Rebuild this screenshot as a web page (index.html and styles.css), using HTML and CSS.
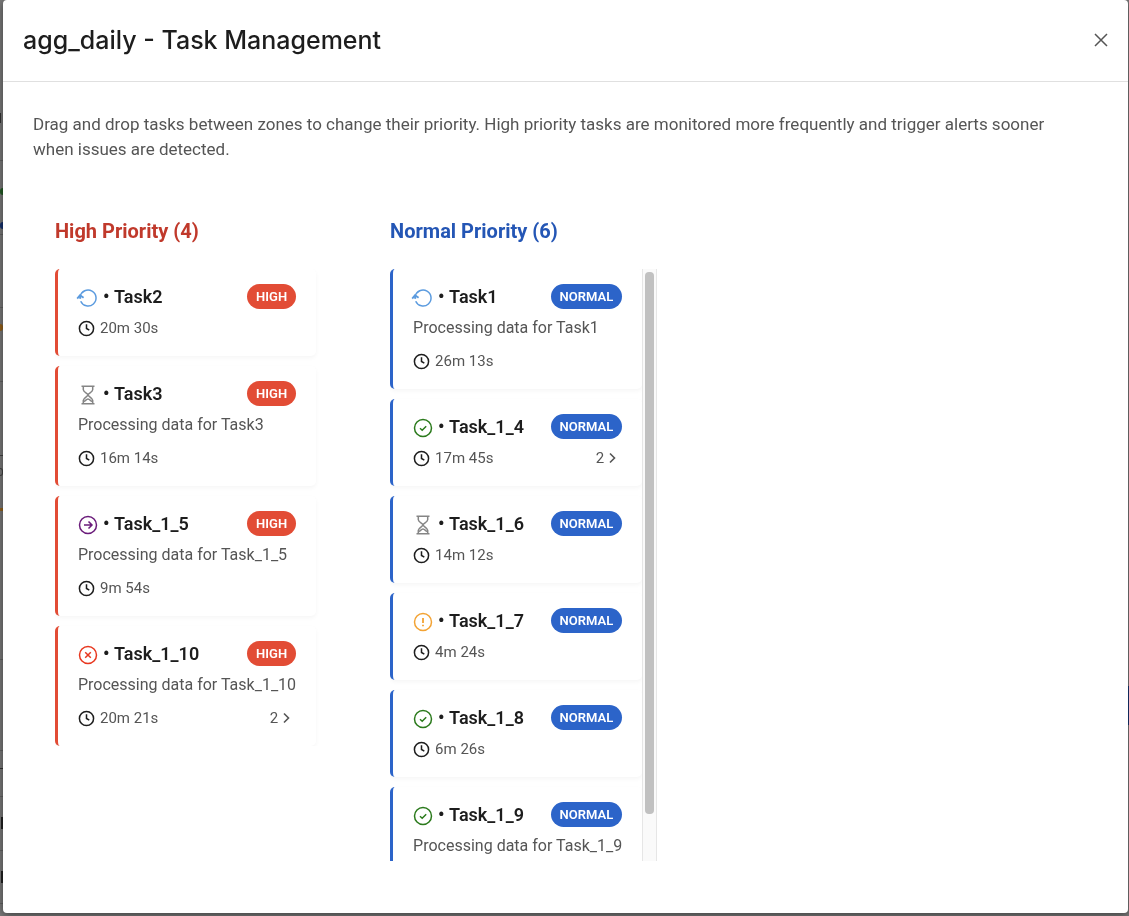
FILE: index.html
```
<!DOCTYPE html>
<html lang="en">
<head>
<meta charset="utf-8">
<title>agg_daily - Task Management</title>
<link rel="stylesheet" href="styles.css">
</head>
<body>
<svg class="sprite" aria-hidden="true">
  <symbol id="running" viewBox="0 0 20 20" overflow="visible"><path d="M2.200 8.500A8 8 0 1 1 2.700 13.200"/><path d="M-.8 10.600 2 7.200l3.600 2.600M2 7.400l.3 3.400" stroke-width="1.800"/></symbol>
  <symbol id="waiting" viewBox="0 0 20 20"><path d="M3.500 1.200h13M3.500 18.800h13M5.300 1.200v3.600c0 2.300 4.700 4 4.700 5.200s-4.700 2.900-4.700 5.200v3.600M14.700 1.200v3.600c0 2.300-4.700 4-4.700 5.200s4.700 2.900 4.700 5.200v3.600"/><path d="M6 16.500c1.500-.8 2.500-2.500 4-2.500s2.500 1.700 4 2.500"/></symbol>
  <symbol id="moved" viewBox="0 0 20 20"><circle cx="10" cy="10" r="8.500"/><path d="M6 10h8M10.500 6.500 14 10l-3.500 3.500"/></symbol>
  <symbol id="failed" viewBox="0 0 20 20"><circle cx="10" cy="10" r="8.500"/><path d="m7.200 7.200 5.600 5.600M12.800 7.200l-5.600 5.600"/></symbol>
  <symbol id="done" viewBox="0 0 20 20"><circle cx="10" cy="10" r="8.500"/><path d="m7 10.200 2.200 2 4-4"/></symbol>
  <symbol id="warning" viewBox="0 0 20 20"><circle cx="10" cy="10" r="8.500"/><path d="M10 6v5M10 12.700v1.600" stroke-width="1.800"/></symbol>
  <symbol id="clock" viewBox="0 0 18 18"><circle cx="9" cy="9" r="7.500"/><path d="M9 4.600V9l3 1.700"/></symbol>
  <symbol id="chevron" viewBox="0 0 10 12"><path d="m2 1.500 4.500 4.500L2 10.500"/></symbol>
</svg>

<div class="backdrop" aria-hidden="true">
  <i class="mark text-a"></i><i class="mark rule-a"></i><i class="mark green"></i><i class="mark blue"></i><i class="mark rule-b"></i><i class="mark rule-c"></i>
  <i class="mark orange"></i><i class="mark rule-d"></i><i class="mark rule-e"></i><i class="mark ring"></i><i class="mark amber"></i><i class="mark rule-f"></i><i class="mark rule-g"></i><i class="mark text-b"></i>
  <i class="mark rule-h"></i><i class="mark text-c"></i><i class="mark rule-i"></i><i class="mark text-d"></i><i class="mark rule-j"></i><i class="mark navy"></i>
</div>

<main class="dialog" role="dialog" aria-labelledby="dialog-title">
  <header class="dialog-header">
    <h1 id="dialog-title">agg_daily - Task Management</h1>
    <button class="close" type="button" aria-label="Close"><svg viewBox="0 0 16 16"><path d="m2 2 12 12M14 2 2 14"/></svg></button>
  </header>
  <div class="dialog-body">
    <p class="intro">Drag and drop tasks between zones to change their priority. High priority tasks are monitored more frequently and trigger alerts sooner when issues are detected.</p>
    <div class="zones">
      <section class="zone high">
        <h2>High Priority (4)</h2>
        <div class="list">
          <article class="card">
            <div class="top"><svg class="status running"><use href="#running"/></svg><span class="dot">•</span><h3>Task2</h3><span class="pill">HIGH</span></div>
            <div class="meta"><svg class="clock"><use href="#clock"/></svg><span>20m 30s</span></div>
          </article>
          <article class="card">
            <div class="top"><svg class="status waiting"><use href="#waiting"/></svg><span class="dot">•</span><h3>Task3</h3><span class="pill">HIGH</span></div>
            <p class="desc">Processing data for Task3</p>
            <div class="meta"><svg class="clock"><use href="#clock"/></svg><span>16m 14s</span></div>
          </article>
          <article class="card">
            <div class="top"><svg class="status moved"><use href="#moved"/></svg><span class="dot">•</span><h3>Task_1_5</h3><span class="pill">HIGH</span></div>
            <p class="desc">Processing data for Task_1_5</p>
            <div class="meta"><svg class="clock"><use href="#clock"/></svg><span>9m 54s</span></div>
          </article>
          <article class="card">
            <div class="top"><svg class="status failed"><use href="#failed"/></svg><span class="dot">•</span><h3>Task_1_10</h3><span class="pill">HIGH</span></div>
            <p class="desc">Processing data for Task_1_10</p>
            <div class="meta"><svg class="clock"><use href="#clock"/></svg><span>20m 21s</span><button class="more" type="button">2<svg><use href="#chevron"/></svg></button></div>
          </article>
        </div>
      </section>
      <section class="zone normal">
        <h2>Normal Priority (6)</h2>
        <div class="scroller">
        <div class="list">
          <article class="card">
            <div class="top"><svg class="status running"><use href="#running"/></svg><span class="dot">•</span><h3>Task1</h3><span class="pill">NORMAL</span></div>
            <p class="desc">Processing data for Task1</p>
            <div class="meta"><svg class="clock"><use href="#clock"/></svg><span>26m 13s</span></div>
          </article>
          <article class="card">
            <div class="top"><svg class="status done"><use href="#done"/></svg><span class="dot">•</span><h3>Task_1_4</h3><span class="pill">NORMAL</span></div>
            <div class="meta"><svg class="clock"><use href="#clock"/></svg><span>17m 45s</span><button class="more" type="button">2<svg><use href="#chevron"/></svg></button></div>
          </article>
          <article class="card">
            <div class="top"><svg class="status waiting"><use href="#waiting"/></svg><span class="dot">•</span><h3>Task_1_6</h3><span class="pill">NORMAL</span></div>
            <div class="meta"><svg class="clock"><use href="#clock"/></svg><span>14m 12s</span></div>
          </article>
          <article class="card">
            <div class="top"><svg class="status warning"><use href="#warning"/></svg><span class="dot">•</span><h3>Task_1_7</h3><span class="pill">NORMAL</span></div>
            <div class="meta"><svg class="clock"><use href="#clock"/></svg><span>4m 24s</span></div>
          </article>
          <article class="card">
            <div class="top"><svg class="status done"><use href="#done"/></svg><span class="dot">•</span><h3>Task_1_8</h3><span class="pill">NORMAL</span></div>
            <div class="meta"><svg class="clock"><use href="#clock"/></svg><span>6m 26s</span></div>
          </article>
          <article class="card">
            <div class="top"><svg class="status done"><use href="#done"/></svg><span class="dot">•</span><h3>Task_1_9</h3><span class="pill">NORMAL</span></div>
            <p class="desc">Processing data for Task_1_9</p>
            <div class="meta"></div>
          </article>
        </div>
        <div class="track" aria-hidden="true"><div class="thumb"></div></div>
        </div>
      </section>
    </div>
  </div>
</main>
</body>
</html>
```

FILE: styles.css
```
* { box-sizing: border-box; }
body {
  margin: 0;
  height: 100vh;
  padding: 0 1px 3px 3px;
  overflow: hidden;
  background: #7a7a7a;
  font-family: Roboto, "Liberation Sans", sans-serif;
  color: #1d1d1d;
}
h1, h2, h3, p { margin: 0; }
button { border: 0; padding: 0; background: none; font: inherit; color: inherit; cursor: pointer; }
svg { fill: none; stroke: currentColor; flex: none; }
.sprite { position: absolute; width: 0; height: 0; }

/* Dimmed page behind the dialog */
.backdrop { position: fixed; inset: 0; }
.mark { position: absolute; left: 0; width: 3px; height: 1px; background: #636363; }
.text-a { top: 113px; width: 1px; height: 10px; background: #333; }
.rule-a { top: 160px; }
.green { top: 188px; height: 7px; border-radius: 4px 0 0 4px; background: #235c25; }
.blue { top: 222px; height: 7px; border-radius: 4px 0 0 4px; background: #16316e; }
.rule-b { top: 234px; }
.rule-c { top: 307px; }
.orange { top: 324px; height: 7px; border-radius: 0 4px 4px 0; background: #96611a; }
.rule-d { top: 381px; }
.rule-e { top: 455px; background: #444; }
.ring { top: 468px; height: 8px; background: none; border: 1px solid #444; border-left: 0; border-radius: 0 3px 3px 0; }
.amber { top: 508px; height: 3px; background: #94641f; }
.rule-f { top: 659px; }
.rule-g { top: 750px; }
.text-b { top: 768px; background: #333; }
.rule-h { top: 796px; }
.text-c { top: 817px; left: 1px; width: 2px; height: 12px; background: #222; }
.rule-i { top: 850px; }
.text-d { top: 871px; left: 1px; width: 2px; height: 12px; background: #222; }
.rule-j { top: 903px; }
.navy { top: 686px; left: auto; right: 0; width: 1px; height: 39px; background: #143474; }

.dialog {
  position: relative;
  height: 100%;
  display: flex;
  flex-direction: column;
  background: #fff;
  border-radius: 4px;
  box-shadow: 0 2px 8px rgba(0, 0, 0, .5);
}
.dialog-header {
  display: flex;
  align-items: center;
  justify-content: space-between;
  padding: 20px 19px 20px 20px;
  border-bottom: 1px solid #e0e0e0;
}
h1 { font: 500 25px/41px Inter, sans-serif; }
.close { display: grid; place-items: center; width: 16px; height: 16px; margin-bottom: 2px; color: #555; }
.close svg { width: 16px; height: 16px; stroke-width: 1.5; }

.dialog-body { flex: 1; min-height: 0; display: flex; flex-direction: column; padding: 30px 30px 52px; }
.intro { padding-right: 22px; font-size: 17px; line-height: 25px; color: #555; }
.zones { flex: 1; min-height: 0; display: flex; gap: 68px; padding: 54px 22px 0; }
.zone { flex: 0 1 267px; display: flex; flex-direction: column; min-height: 0; }
h2 { margin-bottom: 23px; font-size: 20px; line-height: 30px; font-weight: 700; }
.high { --accent: #e24c35; }
.normal { --accent: #2c64c9; }
.high h2 { color: #c0392b; }
.normal h2 { color: #2456b5; }

.list { display: flex; flex-direction: column; gap: 10px; }
.high .list { padding-right: 6px; overflow: hidden; }
.scroller { flex: 1; min-height: 0; display: flex; }
.normal .list { flex: 1; overflow-y: auto; scrollbar-width: none; }
.track { width: 15px; padding: 3px 2px; background: #fafafa; border: solid #e6e6e6; border-width: 0 1px; }
.thumb { width: 9px; height: 92.5%; margin: 0 auto; border-radius: 4px; background: #c1c1c1; }

.card {
  flex: none;
  padding: 15px 20px 17px;
  border-left: 3px solid var(--accent);
  border-radius: 5px;
  background: #fff;
  box-shadow: 0 2px 4px rgba(0, 0, 0, .04);
}
.top { display: flex; align-items: center; height: 25px; margin-bottom: 8px; }
.status { width: 20px; height: 20px; margin-top: 2px; stroke-width: 1.5; overflow: visible; }
.running { color: #5b9bdf; }
.waiting { color: #858585; }
.moved { color: #6a1b7a; }
.failed { color: #e8371f; }
.done { color: #2b7a1c; }
.warning { color: #f3a334; }
.dot { width: 16px; padding-left: 5px; font-size: 18px; line-height: 25px; font-weight: 700; }
h3 { font-size: 18px; line-height: 25px; font-weight: 600; }
.pill {
  margin-left: auto;
  padding: 0 9px;
  border-radius: 13px;
  background: var(--accent);
  color: #fff;
  font-size: 13px;
  line-height: 25px;
  font-weight: 600;
}
.desc { margin-bottom: 12px; font-size: 16px; line-height: 21px; color: #555; white-space: nowrap; }
.meta { display: flex; align-items: center; gap: 5px; height: 22px; font-size: 15px; color: #555; }
.clock { width: 17px; height: 17px; stroke-width: 1.6; color: #1d1d1d; }
.more { display: flex; align-items: center; gap: 4px; margin-left: auto; padding-right: 4px; }
.more svg { width: 10px; height: 12px; stroke-width: 1.6; }
```
